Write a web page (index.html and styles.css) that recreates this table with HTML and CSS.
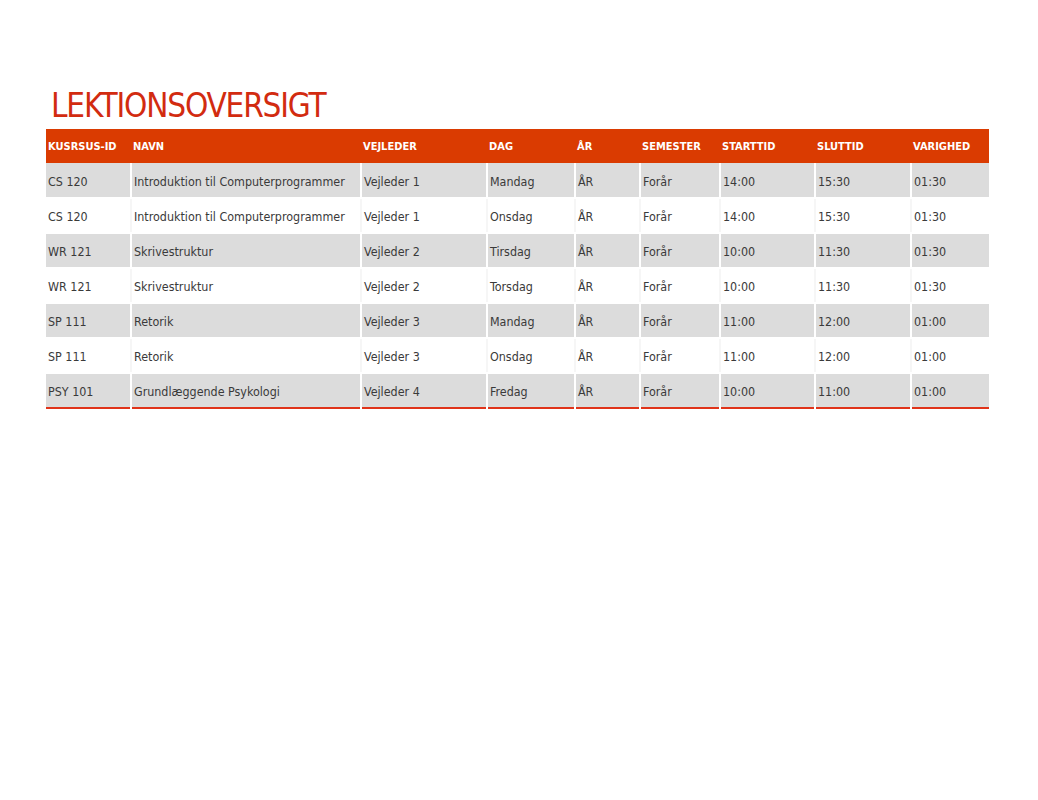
FILE: index.html
```html
<!DOCTYPE html>
<html lang="da">
<head>
<meta charset="utf-8">
<title>Lektionsoversigt</title>
<link rel="stylesheet" href="styles.css">
</head>
<body>
<main class="page">
  <h1 class="title">LEKTIONSOVERSIGT</h1>
  <table class="schedule">
    <colgroup>
      <col class="c1"><col class="c2"><col class="c3"><col class="c4"><col class="c5">
      <col class="c6"><col class="c7"><col class="c8"><col class="c9">
    </colgroup>
    <thead>
      <tr>
        <th>KUSRSUS-ID</th><th>NAVN</th><th>VEJLEDER</th><th>DAG</th><th>ÅR</th>
        <th>SEMESTER</th><th>STARTTID</th><th>SLUTTID</th><th>VARIGHED</th>
      </tr>
    </thead>
    <tbody>
      <tr><td>CS 120</td><td>Introduktion til Computerprogrammer</td><td>Vejleder 1</td><td>Mandag</td><td>ÅR</td><td>Forår</td><td>14:00</td><td>15:30</td><td>01:30</td></tr>
      <tr><td>CS 120</td><td>Introduktion til Computerprogrammer</td><td>Vejleder 1</td><td>Onsdag</td><td>ÅR</td><td>Forår</td><td>14:00</td><td>15:30</td><td>01:30</td></tr>
      <tr><td>WR 121</td><td>Skrivestruktur</td><td>Vejleder 2</td><td>Tirsdag</td><td>ÅR</td><td>Forår</td><td>10:00</td><td>11:30</td><td>01:30</td></tr>
      <tr><td>WR 121</td><td>Skrivestruktur</td><td>Vejleder 2</td><td>Torsdag</td><td>ÅR</td><td>Forår</td><td>10:00</td><td>11:30</td><td>01:30</td></tr>
      <tr><td>SP 111</td><td>Retorik</td><td>Vejleder 3</td><td>Mandag</td><td>ÅR</td><td>Forår</td><td>11:00</td><td>12:00</td><td>01:00</td></tr>
      <tr><td>SP 111</td><td>Retorik</td><td>Vejleder 3</td><td>Onsdag</td><td>ÅR</td><td>Forår</td><td>11:00</td><td>12:00</td><td>01:00</td></tr>
      <tr><td>PSY 101</td><td>Grundlæggende Psykologi</td><td>Vejleder 4</td><td>Fredag</td><td>ÅR</td><td>Forår</td><td>10:00</td><td>11:00</td><td>01:00</td></tr>
    </tbody>
  </table>
</main>
</body>
</html>
```

FILE: styles.css
```css
html, body {
  margin: 0;
  padding: 0;
  background: #ffffff;
}

.page {
  padding: 88px 49px 0 46px;
  font-family: "DejaVu Sans Condensed", "Liberation Sans", sans-serif;
}

.title {
  margin: 0 0 6px 5px;
  font-family: "Liberation Sans Narrow", "DejaVu Sans Condensed", "Liberation Sans", sans-serif;
  font-weight: normal;
  font-size: 33px;
  line-height: 35px;
  color: #d22b10;
  letter-spacing: -1.2px;
}

.schedule {
  width: 943px;
  border-collapse: collapse;
  table-layout: fixed;
  border-bottom: 2px solid #e0341a;
}

.c1 { width: 85px; }
.c2 { width: 230px; }
.c3 { width: 126px; }
.c4 { width: 88px; }
.c5 { width: 65px; }
.c6 { width: 80px; }
.c7 { width: 95px; }
.c8 { width: 96px; }
.c9 { width: 78px; }

.schedule th {
  background: #da3b01;
  color: #ffffff;
  font-size: 11px;
  font-weight: bold;
  text-align: left;
  height: 34px;
  padding: 0 2px;
  vertical-align: middle;
}

.schedule td {
  height: 35px;
  padding: 2px 2px 0;
  font-size: 12.4px;
  color: #3a3a3a;
  border-right: 2px solid #ffffff;
  border-bottom: 2px solid #ffffff;
  white-space: nowrap;
  vertical-align: middle;
  box-sizing: border-box;
}

.schedule td:last-child {
  border-right: none;
}

.schedule tbody tr:nth-child(odd) td {
  background: #dcdcdc;
}

.schedule tbody tr:nth-child(even) td {
  background: #ffffff;
  border-right-color: #f6f6f6;
}

.schedule tbody tr:last-child td {
  border-bottom: none;
}
```
